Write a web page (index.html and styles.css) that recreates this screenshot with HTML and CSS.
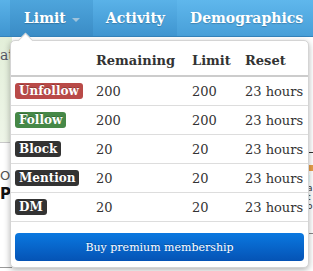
FILE: index.html
```html
<!DOCTYPE html>
<html>
<head>
<meta charset="utf-8">
<link rel="stylesheet" href="styles.css">
</head>
<body>
<div class="page">
  <nav class="nav">
    <div class="nav-item active">Limit <span class="caret"></span></div>
    <div class="nav-item">Activity</div>
    <div class="nav-item last">Demographics</div>
  </nav>
  <div class="under">
    <div class="left-strip">
      <div class="green">at</div>
      <div class="frag">
        <div class="f1">O</div>
        <div class="f2">PC</div>
      </div>
    </div>
    <div class="right-strip">
      <div class="rline"></div>
      <div class="orange"></div>
      <div class="rtext">l<br>a<br>t<br>o</div>
      <div class="rline2"></div>
    </div>
  </div>

  <div class="dropdown">
    <div class="arrow"></div>
    <table class="limits">
      <thead>
        <tr><th class="c-label"></th><th class="c-rem">Remaining</th><th class="c-lim">Limit</th><th class="c-reset">Reset</th></tr>
      </thead>
      <tbody>
        <tr><td class="c-label"><span class="badge red">Unfollow</span></td><td>200</td><td>200</td><td>23 hours</td></tr>
        <tr><td class="c-label"><span class="badge green-b">Follow</span></td><td>200</td><td>200</td><td>23 hours</td></tr>
        <tr><td class="c-label"><span class="badge dark">Block</span></td><td>20</td><td>20</td><td>23 hours</td></tr>
        <tr><td class="c-label"><span class="badge dark">Mention</span></td><td>20</td><td>20</td><td>23 hours</td></tr>
        <tr><td class="c-label"><span class="badge dark">DM</span></td><td>20</td><td>20</td><td>23 hours</td></tr>
      </tbody>
    </table>
    <div class="btn-wrap"><button class="buy">Buy premium membership</button></div>
  </div>
</div>
</body>
</html>
```

FILE: styles.css
```css
html, body {
  margin: 0;
  padding: 0;
}
body {
  width: 313px;
  height: 271px;
  overflow: hidden;
  background: #fff;
  font-family: "DejaVu Serif", Georgia, serif;
  color: #333;
}
.page {
  position: relative;
  width: 313px;
  height: 271px;
}
.nav {
  display: flex;
  height: 36px;
  background: linear-gradient(#5ab2e8, #3f95d0);
  border-bottom: 1px solid #3583bb;
  padding-left: 10px;
}
.nav-item {
  display: flex;
  align-items: center;
  padding: 0 12px 0 13px;
  color: #fff;
  font-weight: bold;
  font-size: 14px;
  text-shadow: 0 1px 1px rgba(0,0,0,0.2);
}
.nav-item.active {
  padding-left: 14px;
  padding-right: 13px;
  background: linear-gradient(#4ea5dc, #3a8cc6);
}
.nav-item.last {
  flex: 1;
  background: linear-gradient(#5fb7ec, #489fd8);
}
.caret {
  display: inline-block;
  margin-left: 6px;
  margin-top: 4px;
  width: 0;
  height: 0;
  border-left: 4px solid transparent;
  border-right: 4px solid transparent;
  border-top: 4px solid #9fc3dc;
}
.under {
  display: flex;
  justify-content: space-between;
  height: 234px;
}
.left-strip {
  width: 12px;
  display: flex;
  flex-direction: column;
}
.green {
  height: 106px;
  background: linear-gradient(#e3efd9, #eef5e8);
  border-bottom: 1px solid #c9c9c9;
  font-size: 14px;
  color: #556;
  padding-top: 10px;
  box-sizing: border-box;
  line-height: 16px;
}
.frag {
  font-family: "DejaVu Sans", sans-serif;
  padding-top: 26px;
  height: 98px;
  border-bottom: 1px solid #999;
}
.f1 { font-size: 13px; color: #555; line-height: 14px; }
.f2 { font-size: 15px; font-weight: bold; color: #111; line-height: 22px; }
.right-strip {
  width: 6px;
  padding-top: 115px;
  font-family: "DejaVu Sans", sans-serif;
}
.rline { height: 1px; background: #333; }
.orange { margin-top: 12px; height: 6px; background: #e8a04a; }
.rtext { font-size: 9px; line-height: 9px; color: #333; padding-top: 4px; height: 40px; }
.rline2 { height: 1px; background: #888; margin-top: 18px; }

.dropdown {
  position: absolute;
  left: 10px;
  top: 40px;
  width: 299px;
  height: 228px;
  background: #fff;
  border-radius: 5px;
  box-shadow: 0 2px 6px rgba(0,0,0,0.3);
  border: 1px solid #d4d4d4;
  box-sizing: border-box;
}
.arrow {
  position: absolute;
  left: 9px;
  top: -6px;
  width: 10px;
  height: 10px;
  background: #fff;
  transform: rotate(45deg);
  border-left: 1px solid #d4d4d4;
  border-top: 1px solid #d4d4d4;
}
.limits {
  position: relative;
  width: 100%;
  border-collapse: collapse;
  font-size: 13px;
}
.limits th {
  height: 35px;
  box-sizing: border-box;
  padding: 4px 0 0 0;
  text-align: left;
  font-weight: bold;
  border-bottom: 2px solid #ccc;
  color: #333;
}
.limits td {
  height: 28px;
  padding: 0;
  border-bottom: 1px solid #ddd;
  vertical-align: middle;
}
.c-label { width: 81px; padding-left: 4px !important; }
.c-rem { width: 96px; }
.c-lim { width: 53px; }
.badge {
  display: inline-block;
  font-weight: bold;
  font-size: 12px;
  color: #fff;
  padding: 0 4px;
  line-height: 16px;
  border-radius: 3px;
  text-shadow: 0 -1px 0 rgba(0,0,0,0.25);
}
.red { background: #b94a48; }
.green-b { background: #468847; }
.dark { background: #333; }
.btn-wrap {
  padding: 11px 4px 0 4px;
}
.buy {
  display: block;
  width: 100%;
  height: 28px;
  border: 0;
  border-radius: 4px;
  background: linear-gradient(#0a78e0, #0553b5);
  color: #fff;
  font-family: "DejaVu Serif", Georgia, serif;
  font-size: 11px;
  text-shadow: 0 -1px 0 rgba(0,0,0,0.25);
}
```
